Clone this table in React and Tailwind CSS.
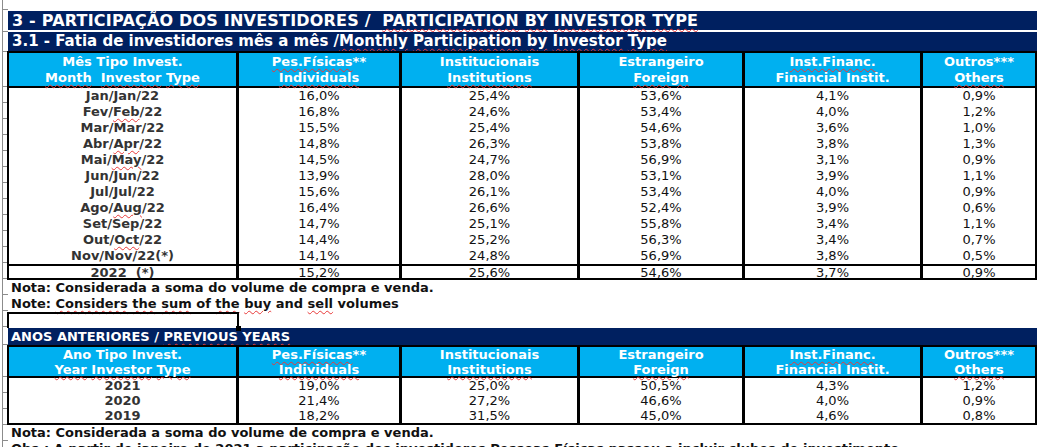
import React from 'react';

const monthly = [
  { label: 'Jan/Jan/22', v: ['16,0', '25,4', '53,6', '4,1', '0,9'] },
  { label: ['Fev/', 'Feb', '/22'], v: ['16,8', '24,6', '53,4', '4,0', '1,2'] },
  { label: 'Mar/Mar/22', v: ['15,5', '25,4', '54,6', '3,6', '1,0'] },
  { label: ['Abr/', 'Apr', '/22'], v: ['14,8', '26,3', '53,8', '3,8', '1,3'] },
  { label: ['Mai/', 'May', '/22'], v: ['14,5', '24,7', '56,9', '3,1', '0,9'] },
  { label: 'Jun/Jun/22', v: ['13,9', '28,0', '53,1', '3,9', '1,1'] },
  { label: 'Jul/Jul/22', v: ['15,6', '26,1', '53,4', '4,0', '0,9'] },
  { label: ['Ago/', 'Aug', '/22'], v: ['16,4', '26,6', '52,4', '3,9', '0,6'] },
  { label: 'Set/Sep/22', v: ['14,7', '25,1', '55,8', '3,4', '1,1'] },
  { label: ['Out/', 'Oct', '/22'], v: ['14,4', '25,2', '56,3', '3,4', '0,7'] },
  { label: 'Nov/Nov/22(*)', v: ['14,1', '24,8', '56,9', '3,8', '0,5'] },
];

const yearly = [
  { label: '2021', v: ['19,0', '25,0', '50,5', '4,3', '1,2'] },
  { label: '2020', v: ['21,4', '27,2', '46,6', '4,0', '0,9'] },
  { label: '2019', v: ['18,2', '31,5', '45,0', '4,6', '0,8'] },
];

// gutter tick spacing (spreadsheet row heights)
const ticks = [10, 22, 20, 35, 16, 16, 16, 16, 16, 16, 16, 16, 16, 16, 16, 16, 16, 16, 16, 18, 32, 16, 16, 16, 16, 16];

// red spell-check squiggle
const W = ({ children }) => (
  <span className="underline decoration-wavy decoration-[#e83a3a] decoration-1 underline-offset-[2px]">{children}</span>
);

const Label = ({ label }) =>
  Array.isArray(label) ? (
    <>
      {label[0]}
      <W>{label[1]}</W>
      {label[2]}
    </>
  ) : (
    label
  );

const Row = ({ label, v, tall }) => (
  <div
    className={
      tall
        ? 'grid grid-cols-[230px_163px_178px_165px_178px_112px] h-[16px] items-stretch [&>*]:items-center'
        : 'grid grid-cols-[230px_163px_178px_165px_178px_112px] h-[15px] leading-[16px] [&>*]:items-end'
    }
  >
    <div className="border-r-[3px] border-black flex justify-center font-bold text-[#333] whitespace-pre">
      <Label label={label} />
    </div>
    {v.map((x, i) => (
      <div
        key={i}
        className={i < 4 ? 'border-r-[3px] border-black flex justify-center text-[#111]' : 'flex justify-center text-[#111]'}
      >
        {x}%
      </div>
    ))}
  </div>
);

const HeaderCell = ({ top, bottom, last }) => (
  <div
    className={
      last
        ? 'flex flex-col items-center justify-end text-white font-bold'
        : 'flex flex-col items-center justify-end text-white font-bold border-r-[3px] border-black'
    }
  >
    <div className="whitespace-pre">{top}</div>
    <div className="whitespace-pre">{bottom}</div>
  </div>
);

const Header = ({ first, h }) => (
  <div className={`grid grid-cols-[230px_163px_178px_165px_178px_112px] bg-[#00b0f0] border-b-2 border-black ${h}`}>
    {first}
    <HeaderCell top={<><W>Pes.Físicas</W>**</>} bottom={<W>Individuals</W>} />
    <HeaderCell top="Institucionais" bottom={<W>Institutions</W>} />
    <HeaderCell top="Estrangeiro" bottom={<W>Foreign</W>} />
    <HeaderCell top={<W>Inst.Financ.</W>} bottom="Financial Instit." />
    <HeaderCell top="Outros***" bottom={<W>Others</W>} last />
  </div>
);

export default function App() {
  return (
    <div className="flex w-[1049px] h-[447px] overflow-hidden bg-white font-['DejaVu_Sans',sans-serif] text-[13px] leading-[16px]">
      {/* row gutter */}
      <div className="w-[7px] shrink-0 flex flex-col">
        <div className="ml-[2px] border-l border-[#8c8c8c] h-full flex flex-col">
          {ticks.map((h, i) => (
            <div key={i} className="border-b border-[#8c8c8c] w-[5px] shrink-0" style={{ height: h }} />
          ))}
        </div>
      </div>

      <div className="flex flex-col pt-[11px] [&>*]:shrink-0">
        <div className="ml-[1px] w-[1029px] h-[19px] bg-[#002060] text-white font-bold text-[16px] leading-[19px] tracking-[0.2px] pl-[4px] whitespace-pre">
          3 - PARTICIPAÇÃO DOS INVESTIDORES /  <W>PARTICIPATION</W> <W>BY</W> <W>INVESTOR</W> <W>TYPE</W>
        </div>
        <div className="ml-[1px] mt-[2px] w-[1029px] h-[19px] bg-[#002060] text-white font-bold text-[15px] leading-[19px] pl-[4px] whitespace-pre">
          3.1 - Fatia de investidores mês a mês /<W>Monthly</W> <W>Participation</W> <W>by</W> <W>Investor</W> <W>Type</W>
        </div>

        {/* monthly table */}
        <div className="w-[1030px] border-2 border-black">
          <Header
            h="h-[35px]"
            first={
              <HeaderCell
                top="Mês Tipo Invest."
                bottom={<><W>Month</W>  <W>Investor</W> <W>Type</W></>}
              />
            }
          />
          {monthly.map((r) => (
            <Row key={r.v.join()} label={r.label} v={r.v} tall />
          ))}
          <div className="border-t-2 border-black">
            <div className="grid grid-cols-[230px_163px_178px_165px_178px_112px] h-[12px] leading-[13px]">
              <div className="border-r-[3px] border-black flex items-center justify-center font-bold text-[#333] whitespace-pre">2022  (*)</div>
              {['15,2', '25,6', '54,6', '3,7', '0,9'].map((x, i) => (
                <div
                  key={i}
                  className={i < 4 ? 'border-r-[3px] border-black flex items-center justify-center text-[#111]' : 'flex items-center justify-center text-[#111]'}
                >
                  {x}%
                </div>
              ))}
            </div>
          </div>
        </div>

        <div className="pl-[4px] font-bold text-[#111] h-[16px]">Nota: Considerada a soma do volume de compra e venda.</div>
        <div className="pl-[4px] font-bold text-[#111] h-[16px]">
          Note: <W>Considers</W> <W>the</W> <W>sum</W> of <W>the</W> <W>buy</W> and <W>sell</W> volumes
        </div>

        {/* selected empty cell */}
        <div className="relative w-[232px] h-[16px] border-x-2 border-t-2 border-black">
          <div className="absolute right-[-4px] bottom-[-3px] w-[5px] h-[5px] bg-black" />
        </div>

        <div className="ml-[1px] w-[1029px] h-[17px] bg-[#002060] text-white font-bold leading-[17px] pl-[3px] whitespace-pre">
          ANOS ANTERIORES / <W>PREVIOUS</W> <W>YEARS</W>
        </div>

        {/* yearly table */}
        <div className="w-[1030px] border-2 border-black leading-[15px]">
          <Header
            h="h-[31px]"
            first={
              <HeaderCell top="Ano Tipo Invest." bottom={<><W>Year</W> <W>Investor</W> <W>Type</W></>} />
            }
          />
          {yearly.map((r) => (
            <Row key={r.label} label={r.label} v={r.v} />
          ))}
        </div>

        <div className="pl-[4px] font-bold text-[#111] h-[16px]">Nota: Considerada a soma do volume de compra e venda.</div>
        <div className="pl-[4px] font-bold text-[#111] h-[16px] whitespace-nowrap">
          Obs.: A partir de janeiro de 2021 a participação dos investidores Pessoas Físicas passou a incluir clubes de investimento.
        </div>
      </div>
    </div>
  );
}
